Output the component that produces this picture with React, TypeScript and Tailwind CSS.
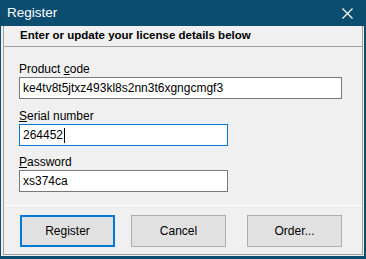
import React from 'react';

const font = { fontFamily: '"Liberation Sans", Arial, sans-serif' };

const Field: React.FC<{
  label: React.ReactNode;
  value: string;
  width: string;
  focused?: boolean;
  top: string;
}> = ({ label, value, width, focused, top }) => (
  <div className={top}>
    <div className="h-[16px] text-[12px] leading-[16px] text-black">{label}</div>
    <div
      className={`${width} h-[22px] bg-white border flex items-center pl-[3px] text-[12px] text-black ${
        focused ? 'border-[#0078d7]' : 'border-[#7a7a7a]'
      }`}
    >
      <span>{value}</span>
      {focused && <span className="ml-[1px] w-px h-[15px] bg-black" />}
    </div>
  </div>
);

const Button: React.FC<{ label: string; primary?: boolean; className?: string }> = ({
  label,
  primary,
  className = '',
}) => (
  <div
    className={`w-[95px] h-[32px] flex items-center justify-center bg-[#e1e1e1] text-[12px] text-black ${
      primary ? 'border-2 border-[#0078d7]' : 'border border-[#adadad]'
    } ${className}`}
  >
    {label}
  </div>
);

export default function App() {
  return (
    <div className="w-[366px] h-[259px] bg-[#0b4d6f] flex flex-col overflow-hidden" style={font}>
      {/* Title bar */}
      <div className="h-[26px] flex items-center justify-between pl-[7px] pr-[13px] shrink-0">
        <span className="text-[13.5px] text-white">Register</span>
        <svg width="11" height="11" viewBox="0 0 11 11" className="block">
          <path d="M0.5 0.5 L10.5 10.5 M10.5 0.5 L0.5 10.5" stroke="white" strokeWidth="1.2" />
        </svg>
      </div>

      {/* Body */}
      <div className="ml-[1px] mr-[2px] mb-[3px] flex-1 bg-[#f0f0f0] pl-[2px] pr-[1px] pb-[1px] flex">
        <div className="flex-1 border-x border-b border-[#a0a0a0] flex flex-col">
          <div className="h-[21px] border-b border-[#a0a0a0] flex items-center pl-[16px] font-bold text-[11.5px] text-black">
            Enter or update your license details below
          </div>

          <div className="pl-[15px]">
            <Field
              top="mt-[14px]"
              width="w-[323px]"
              label={
                <>
                  Product <u>c</u>ode
                </>
              }
              value="ke4tv8t5jtxz493kl8s2nn3t6xgngcmgf3"
            />
            <Field
              top="mt-[9px]"
              width="w-[209px]"
              focused
              label={
                <>
                  <u>S</u>erial number
                </>
              }
              value="264452"
            />
            <Field
              top="mt-[8px]"
              width="w-[209px]"
              label={
                <>
                  <u>P</u>assword
                </>
              }
              value="xs374ca"
            />
          </div>

          <div className="mt-[13px] border-t border-white" />

          <div className="flex pl-[16px] mt-[9px]">
            <Button label="Register" primary />
            <Button label="Cancel" className="ml-[16px]" />
            <Button label="Order..." className="ml-[21px]" />
          </div>
        </div>
      </div>
    </div>
  );
}
